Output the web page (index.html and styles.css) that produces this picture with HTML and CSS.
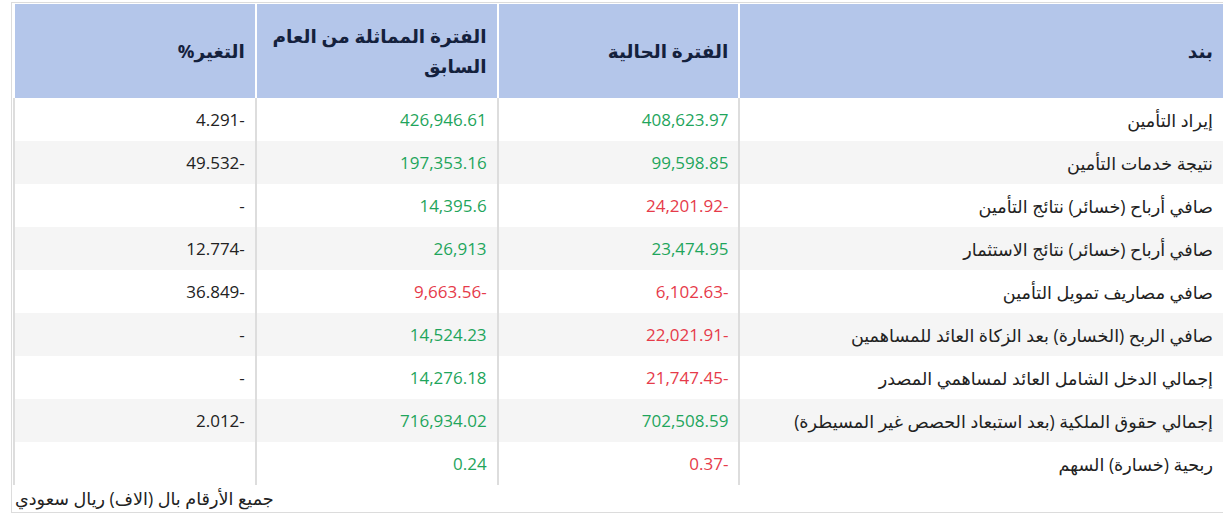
FILE: index.html
```html
<!DOCTYPE html>
<html lang="ar">
<head>
<meta charset="utf-8">
<link rel="stylesheet" href="styles.css">
</head>
<body>
<div class="panel">
  <table class="fin" dir="rtl">
    <thead>
      <tr>
        <th class="c-item">بند</th>
        <th class="c-num">الفترة الحالية</th>
        <th class="c-num">الفترة المماثلة من العام السابق</th>
        <th class="c-num">التغير%</th>
      </tr>
    </thead>
    <tbody>
      <tr><td class="lbl">إيراد التأمين</td><td class="pos">408,623.97</td><td class="pos">426,946.61</td><td>-4.291</td></tr>
      <tr><td class="lbl">نتيجة خدمات التأمين</td><td class="pos">99,598.85</td><td class="pos">197,353.16</td><td>-49.532</td></tr>
      <tr><td class="lbl">صافي أرباح (خسائر) نتائج التأمين</td><td class="neg">-24,201.92</td><td class="pos">14,395.6</td><td>-</td></tr>
      <tr><td class="lbl">صافي أرباح (خسائر) نتائج الاستثمار</td><td class="pos">23,474.95</td><td class="pos">26,913</td><td>-12.774</td></tr>
      <tr><td class="lbl">صافي مصاريف تمويل التأمين</td><td class="neg">-6,102.63</td><td class="neg">-9,663.56</td><td>-36.849</td></tr>
      <tr><td class="lbl">صافي الربح (الخسارة) بعد الزكاة العائد للمساهمين</td><td class="neg">-22,021.91</td><td class="pos">14,524.23</td><td>-</td></tr>
      <tr><td class="lbl">إجمالي الدخل الشامل العائد لمساهمي المصدر</td><td class="neg">-21,747.45</td><td class="pos">14,276.18</td><td>-</td></tr>
      <tr><td class="lbl">إجمالي حقوق الملكية (بعد استبعاد الحصص غير المسيطرة)</td><td class="pos">702,508.59</td><td class="pos">716,934.02</td><td>-2.012</td></tr>
      <tr><td class="lbl">ربحية (خسارة) السهم</td><td class="neg">-0.37</td><td class="pos">0.24</td><td></td></tr>
    </tbody>
  </table>
  <div class="note" dir="rtl">جميع الأرقام بال (الاف) ريال سعودي</div>
</div>
</body>
</html>
```

FILE: styles.css
```css
html, body {
  margin: 0;
  padding: 0;
  background: #ffffff;
  overflow: hidden;
}
body {
  font-family: "Open Sans", "DejaVu Sans", sans-serif;
  color: #222222;
}
.panel {
  margin: 2px 0 0 11px;
  width: 1214px;
  border: 1px solid #dcdcdc;
  border-right: none;
  padding: 1px 0 0 1px;
  box-sizing: border-box;
  height: 511px;
}
.fin {
  width: 1210px;
  border-collapse: collapse;
  table-layout: fixed;
  font-size: 17px;
}
.fin th {
  background: #b4c6ea;
  color: #14213d;
  font-weight: 700;
  font-size: 18.5px;
  text-align: right;
  vertical-align: middle;
  padding: 16px 10px 16px 10px;
  line-height: 30px;
  height: 94px;
  box-sizing: border-box;
  border-left: 2px solid #ffffff;
}
.fin th.c-item { width: 40%; }
.fin th.c-num { width: 20%; }
.fin td {
  height: 43px;
  padding: 0 10px;
  text-align: right;
  vertical-align: middle;
  border-left: 2px solid #dddddd;
  line-height: 22px;
  white-space: nowrap;
}
.fin td.lbl { font-size: 17.6px; }
.fin tbody tr:nth-child(even) td { background: #f5f5f5; }
.fin td.pos { color: #1fa55c; }
.fin td.neg { color: #e63b4a; }
.note {
  font-size: 17.6px;
  text-align: left;
  padding: 1px 0 0 2px;
  color: #222222;
}
```
